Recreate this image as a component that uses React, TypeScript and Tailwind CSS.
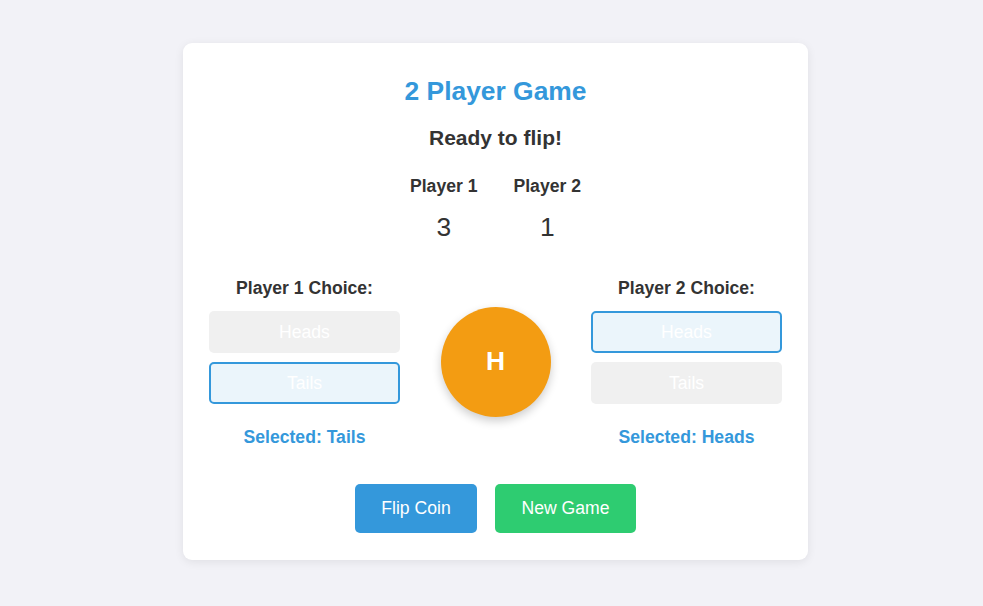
import { useState } from "react";

type Side = "Heads" | "Tails";

interface ChoiceProps {
  label: string;
  value: Side;
  onPick: (s: Side) => void;
}

function ChoiceColumn({ label, value, onPick }: ChoiceProps) {
  return (
    <div className="w-[191px] flex flex-col items-center">
      <p className="text-[17.6px] leading-[20px] font-bold text-[#333]">{label}</p>
      <div className="w-full flex flex-col gap-[9px] mt-[13px]">
        {(["Heads", "Tails"] as Side[]).map((s) => (
          <button
            key={s}
            onClick={() => onPick(s)}
            className={`h-[42px] w-full rounded-[5px] border-2 text-[17.6px] text-white ${
              value === s ? "border-[#3498db] bg-[#ebf5fb]" : "border-transparent bg-[#f0f0f0]"
            }`}
          >
            {s}
          </button>
        ))}
      </div>
      <p className="mt-[23px] text-[17.6px] leading-[20px] font-bold text-[#3498db]">
        Selected: {value}
      </p>
    </div>
  );
}

export default function App() {
  const [p1, setP1] = useState<Side>("Tails");
  const [p2, setP2] = useState<Side>("Heads");
  const [scores, setScores] = useState([3, 1]);
  const [coin, setCoin] = useState<"H" | "T">("H");
  const [status, setStatus] = useState("Ready to flip!");

  function flip() {
    const result: Side = Math.random() < 0.5 ? "Heads" : "Tails";
    setCoin(result === "Heads" ? "H" : "T");
    const next = [...scores];
    if (p1 === result) next[0]++;
    if (p2 === result) next[1]++;
    setScores(next);
    setStatus(`It's ${result}!`);
  }

  function reset() {
    setScores([0, 0]);
    setCoin("H");
    setStatus("Ready to flip!");
  }

  return (
    <div
      className="min-h-[606px] w-full bg-[#f2f2f7] flex justify-center pl-2 pt-[43px]"
      style={{ fontFamily: '"Liberation Sans", Arial, sans-serif' }}
    >
      <div className="w-[625px] h-[517px] bg-white rounded-[9px] shadow-[0_2px_10px_rgba(0,0,0,0.08)] px-[26px] pt-[34px] pb-[27px] flex flex-col items-center">
        <h2 className="text-[26.4px] leading-[28px] font-bold text-[#3498db]">2 Player Game</h2>
        <h3 className="mt-[21px] text-[21px] leading-[24px] font-bold text-[#333]">{status}</h3>

        <div className="mt-[26px] flex gap-9">
          {["Player 1", "Player 2"].map((name, i) => (
            <div key={name} className="flex flex-col items-center">
              <p className="text-[17.6px] leading-[20px] font-bold text-[#333]">{name}</p>
              <p className="mt-[17px] text-[26.4px] leading-[28px] text-[#333]">{scores[i]}</p>
            </div>
          ))}
        </div>

        <div className="mt-[37px] w-full flex items-center justify-between">
          <ChoiceColumn label="Player 1 Choice:" value={p1} onPick={setP1} />
          <div className="w-[110px] h-[110px] -mt-px rounded-full bg-[#f39c12] shadow-[0_4px_10px_rgba(0,0,0,0.2)] flex items-center justify-center text-white font-bold text-[26.4px]">
            {coin}
          </div>
          <ChoiceColumn label="Player 2 Choice:" value={p2} onPick={setP2} />
        </div>

        <div className="mt-[37px] flex gap-[18px]">
          <button
            onClick={flip}
            className="h-[49px] w-[122px] rounded-[5px] bg-[#3498db] text-white text-[17.6px]"
          >
            Flip Coin
          </button>
          <button
            onClick={reset}
            className="h-[49px] w-[141px] rounded-[5px] bg-[#2ecc71] text-white text-[17.6px]"
          >
            New Game
          </button>
        </div>
      </div>
    </div>
  );
}
